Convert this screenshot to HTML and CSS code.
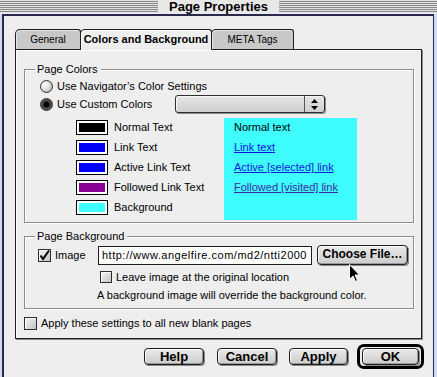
FILE: index.html
```html
<!DOCTYPE html>
<html>
<head>
<meta charset="utf-8">
<link rel="stylesheet" href="styles.css">
</head>
<body>
<div class="titlebar"><span class="title">Page Properties</span></div>
<div class="window">
  <div class="tabs">
    <div class="tab t-general">General</div>
    <div class="tab t-colors active">Colors and Background</div>
    <div class="tab t-meta">META Tags</div>
  </div>
  <div class="panel">
    <fieldset class="group g-colors">
      <legend>Page Colors</legend>
      <div class="opt opt1"><span class="radio"></span><span>Use Navigator’s Color Settings</span></div>
      <div class="opt"><span class="radio on"></span><span class="optlabel">Use Custom Colors</span>
        <span class="popup"><span class="arrows"><svg width="7" height="11" viewBox="0 0 7 11"><path d="M3.5 0L7 4H0Z M0 7H7L3.5 11Z" fill="#000"/></svg></span></span>
      </div>
      <div class="swarea">
        <div class="swatches">
          <div class="swrow"><span class="sw"><i class="c-black"></i></span>Normal Text</div>
          <div class="swrow"><span class="sw"><i class="c-blue"></i></span>Link Text</div>
          <div class="swrow"><span class="sw"><i class="c-blue"></i></span>Active Link Text</div>
          <div class="swrow"><span class="sw"><i class="c-purple"></i></span>Followed Link Text</div>
          <div class="swrow"><span class="sw"><i class="c-cyan"></i></span>Background</div>
        </div>
        <div class="preview">
          <div class="pv">Normal text</div>
          <div class="pv"><span class="lnk">Link text</span></div>
          <div class="pv"><span class="lnk act">Active [selected] link</span></div>
          <div class="pv"><span class="lnk vis">Followed [visited] link</span></div>
        </div>
      </div>
    </fieldset>
    <fieldset class="group g-bg">
      <legend>Page Background</legend>
      <div class="bgrow1">
        <span class="check on"><svg width="13" height="13" viewBox="0 0 13 13"><path d="M2.5 6.5L5 10L11 1.5" fill="none" stroke="#000" stroke-width="2"/></svg></span>
        <span class="imglabel">Image</span>
        <div class="field">http://www.angelfire.com/md2/ntti2000</div>
        <div class="btn choose">Choose File…</div>
      </div>
      <div class="bgrow2"><span class="check small"></span><span>Leave image at the original location</span></div>
      <div class="bgrow3">A background image will override the background color.</div>
    </fieldset>
    <div class="applyrow"><span class="check"></span><span>Apply these settings to all new blank pages</span></div>
  </div>
  <div class="buttons">
    <div class="btn b-help">Help</div>
    <div class="btn b-cancel">Cancel</div>
    <div class="btn b-apply">Apply</div>
    <div class="okring"><div class="btn b-ok">OK</div></div>
  </div>
</div>
<svg class="cursor" width="12" height="19" viewBox="0 0 12 19"><path d="M0.5 0.5V15.5L4 12L6.5 17.5L8.5 16.5L6 11H10.5Z" fill="#000" stroke="#fff" stroke-width="1"/></svg>
</body>
</html>
```
FILE: styles.css
```css
* { box-sizing: border-box; }
html, body { margin: 0; padding: 0; }
body {
  position: relative;
  width: 437px;
  height: 377px;
  overflow: hidden;
  background: #d4daf2;
  font: 11px/13px "Liberation Sans", Arial, sans-serif;
  color: #000;
}
.titlebar {
  height: 14px;
  border-bottom: 1px solid #e8eeff;
  background: repeating-linear-gradient(to bottom, #e2e2e2 0 1px, #8a8a8a 1px 2px);
  display: flex;
  justify-content: center;
}
.title {
  background: #e8e8e8;
  padding: 0 11px;
  font-weight: bold;
  font-size: 13px;
  line-height: 13px;
}
.window {
  margin: 0 3px 0 2px;
  border-style: solid;
  border-color: #2a2a48;
  border-width: 2px 1px 0 2px;
  background: #eeeeee;
  height: 363px;
  padding: 13px 11px 0 11px;
}
.tabs {
  display: flex;
  align-items: flex-start;
  height: 20px;
  position: relative;
  z-index: 1;
}
.tab {
  height: 20px;
  margin-right: -1px;
  border: 1px solid #1e1e1e;
  border-bottom: none;
  border-radius: 5px 3px 0 0;
  background: #c8c8c8;
  box-shadow: inset 1px 1px 0 #e6e6e6;
  font-size: 10px;
  line-height: 19px;
  text-align: center;
}
.t-general { width: 66px; }
.t-colors { width: 132px; }
.t-meta { width: 83px; }
.tab.active {
  height: 21px;
  background: #eeeeee;
  box-shadow: inset 1px 1px 0 #ffffff;
  font-weight: bold;
  font-size: 11px;
}
.panel {
  height: 290px;
  border: 1px solid #1e1e1e;
  box-shadow: 1px 1px 0 #8a8a8a, inset 1px 1px 0 #ffffff;
  padding: 13px 7px 0 8px;
}
.group {
  margin: 0;
  padding: 0 0 2px 0;
  border: 1px solid #8c8c8c;
  box-shadow: inset 1px 1px 0 #ffffff, 1px 1px 0 #ffffff;
  min-width: 0;
}
.group legend {
  margin-left: 10px;
  padding: 0 3px 0 2px;
  line-height: 13px;
  background: #eeeeee;
}
.opt {
  height: 18px;
  display: flex;
  align-items: center;
  margin-left: 15px;
}
.opt1 { margin-top: 1px; }
.radio {
  width: 13px;
  height: 13px;
  margin-right: 4px;
  border-radius: 50%;
  border: 1px solid #2e2e2e;
  background: radial-gradient(circle at 35% 35%, #ffffff 0, #e8e8e8 35%, #a4a4a4 100%);
  flex: none;
}
.radio.on {
  background: radial-gradient(circle at 50% 50%, #000 0 2.6px, #3a3a3a 3.2px, #7a7a7a 100%);
}
.optlabel { width: 118px; }
.popup {
  width: 150px;
  height: 18px;
  border: 1px solid #2e2e2e;
  border-radius: 3px;
  background: linear-gradient(#e6e6e6, #cfcfcf);
  box-shadow: 1px 1px 0 #8a8a8a, inset 1px 1px 0 #f6f6f6;
  display: flex;
  justify-content: flex-end;
}
.arrows {
  width: 20px;
  border-left: 1px solid #555;
  display: flex;
  align-items: center;
  justify-content: center;
}
.swarea {
  display: flex;
  margin: 5px 0 0 51px;
}
.swatches { width: 148px; }
.swrow {
  height: 20px;
  display: flex;
  align-items: center;
  padding-bottom: 1px;
}
.sw {
  width: 32px;
  height: 15px;
  border: 1px solid #000;
  background: #fff;
  padding: 2px;
  margin-right: 6px;
  flex: none;
}
.sw i { display: block; height: 100%; }
.c-black { background: #000; }
.c-blue { background: #0000f8; }
.c-purple { background: #8a0096; }
.c-cyan { background: #3ffcff; }
.preview {
  width: 133px;
  height: 102px;
  background: #3ffcff;
  padding: 0 0 0 10px;
}
.pv { height: 20px; line-height: 19px; }
.lnk { color: #1010e6; text-decoration: underline; }
.lnk.act { color: #1a1ad8; }
.lnk.vis { color: #3a2aa6; }
.g-bg { margin-top: 7px; padding-bottom: 6px; }
.bgrow1 {
  display: flex;
  align-items: center;
  height: 20px;
  margin-top: 2px;
}
.check {
  width: 13px;
  height: 13px;
  border: 1px solid #2e2e2e;
  background: linear-gradient(135deg, #f4f4f4, #c4c4c4);
  box-shadow: inset 1px 1px 0 #fff;
  flex: none;
  position: relative;
}
.check svg { position: absolute; left: -1px; top: -1px; }
.bgrow1 .check { margin-left: 13px; margin-right: 4px; }
.imglabel { width: 43px; }
.field {
  width: 214px;
  height: 19px;
  border: 1px solid #1e1e1e;
  background: #fff;
  padding: 0 0 0 3px;
  line-height: 17px;
  white-space: nowrap;
  overflow: hidden;
  letter-spacing: 0.5px;
}
.btn {
  height: 18px;
  border: 1px solid #1e1e1e;
  border-radius: 4px;
  background: linear-gradient(#eaeaea, #cccccc);
  box-shadow: inset 1px 1px 0 #fafafa, inset -1px -1px 0 #9a9a9a, 1px 1px 0 #8a8a8a;
  font-weight: bold;
  font-size: 12px;
  line-height: 16px;
  text-align: center;
  flex: none;
}
.choose { width: 91px; height: 20px; margin-left: 5px; line-height: 17px; }
.check.small { width: 12px; height: 12px; }
.bgrow2 {
  display: flex;
  align-items: center;
  height: 14px;
  margin: 5px 0 0 75px;
}
.bgrow2 .check { margin-right: 4px; }
.bgrow3 {
  margin: 4px 0 0 72px;
  line-height: 14px;
}
.applyrow {
  display: flex;
  align-items: center;
  height: 13px;
  margin-top: 8px;
}
.applyrow .check { margin-right: 4px; }
.buttons {
  display: flex;
  justify-content: flex-end;
  align-items: center;
  height: 25px;
  margin: 5px -2px 0 0;
}
.buttons .btn { height: 17px; font-size: 13px; line-height: 15px; }
.b-help { width: 60px; margin-right: 13px; }
.b-cancel { width: 60px; margin-right: 12px; }
.b-apply { width: 59px; margin-right: 9px; }
.okring {
  width: 67px;
  height: 25px;
  border: 3px solid #000;
  border-radius: 7px;
  padding: 1px 2px;
}
.b-ok { width: 57px; }
.cursor { position: absolute; left: 349px; top: 264px; }
```
